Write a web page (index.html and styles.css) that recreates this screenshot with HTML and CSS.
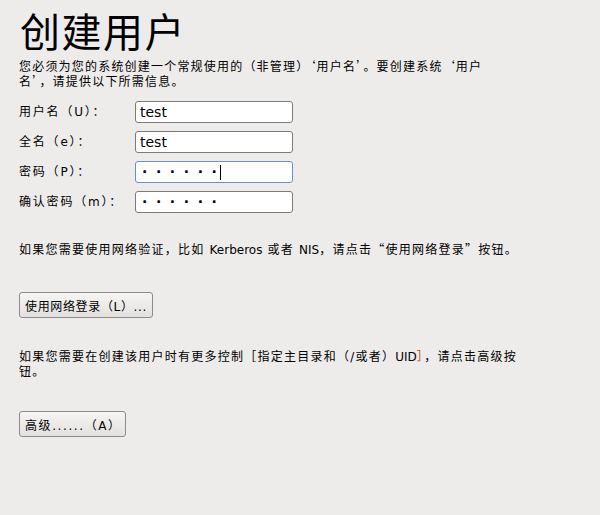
FILE: index.html
```html
<!DOCTYPE html>
<html lang="zh-CN">
<head>
<meta charset="utf-8">
<title>创建用户</title>
<link rel="stylesheet" href="styles.css">
</head>
<body>
<div class="page">
  <h1 class="title">创建用户</h1>
  <p class="intro">您必须为您的系统创建一个常规使用的（非管理）<span class="q">‘</span>用户名<span class="q">’</span>。要创建系统<span class="q">‘</span>用户<br>名<span class="q">’</span>，请提供以下所需信息。</p>

  <div class="form">
    <label class="label">用户名（U）：</label>
    <div class="field">test</div>
    <label class="label">全名（e）：</label>
    <div class="field">test</div>
    <label class="label">密码（P）：</label>
    <div class="field focused"><span class="dots">······</span><span class="caret"></span></div>
    <label class="label">确认密码（m）：</label>
    <div class="field"><span class="dots">······</span></div>
  </div>

  <p class="note note-net">如果您需要使用网络验证，比如 <span class="lat">Kerberos</span> 或者 <span class="lat">NIS</span>，请点击<span class="q">“</span>使用网络登录<span class="q">”</span>按钮。</p>
  <button class="btn btn-net" type="button">使用网络登录（L）...</button>

  <p class="note note-adv">如果您需要在创建该用户时有更多控制［指定主目录和（/或者）<span class="lat">UID</span><span class="bracket">］</span>，请点击高级按<br>钮。</p>
  <button class="btn btn-adv" type="button">高级......（A）</button>
</div>
</body>
</html>
```

FILE: styles.css
```css
html, body {
  margin: 0;
  padding: 0;
  background: #edeceb;
}

body {
  font-family: "DejaVu Sans", "Noto Sans CJK SC", sans-serif;
  font-size: 12px;
  color: #000;
  width: 600px;
  height: 515px;
  overflow: hidden;
}

.page {
  padding-left: 19px;
  display: flex;
  flex-direction: column;
  align-items: flex-start;
}

.q {
  font-family: "Noto Sans CJK SC", sans-serif;
  line-height: 0;
}

.lat {
  letter-spacing: 0;
}

.title {
  font-family: "Noto Sans CJK SC", sans-serif;
  font-size: 40px;
  font-weight: normal;
  line-height: 44px;
  letter-spacing: 1.5px;
  margin: 8px 0 0 1px;
}

.intro {
  margin: 8px 0 0 0;
  line-height: 15px;
  letter-spacing: 1.2px;
}

.form {
  margin-top: 11px;
  display: grid;
  grid-template-columns: 116px 158px;
  grid-auto-rows: 22px;
  row-gap: 8px;
  align-items: center;
}

.label {
  font-size: 12px;
  line-height: 22px;
  letter-spacing: 1.8px;
}

.field {
  box-sizing: border-box;
  height: 22px;
  background: #fff;
  border: 1px solid #7c7b79;
  border-radius: 3px;
  font-size: 14px;
  line-height: 20px;
  padding-left: 4px;
  display: flex;
  align-items: center;
}

.field.focused {
  border-color: #6b8fc2;
}

.dots {
  letter-spacing: 8.6px;
  padding-left: 2px;
  font-weight: bold;
}

.caret {
  display: inline-block;
  width: 1px;
  height: 15px;
  background: #000;
  margin-left: -6px;
}

.note {
  margin: 0;
  line-height: 15px;
  letter-spacing: 1.25px;
}

.note-net {
  margin-top: 30px;
}

.note-adv {
  margin-top: 32px;
}

.bracket {
  color: #c24a1c;
}

.btn {
  box-sizing: border-box;
  height: 26px;
  border: 1px solid #8e8c89;
  border-radius: 3px;
  background: linear-gradient(#f6f5f4, #e3e1df);
  font-family: "DejaVu Sans", "Noto Sans CJK SC", sans-serif;
  font-size: 12px;
  color: #000;
  padding: 0 5px;
  text-align: left;
  white-space: nowrap;
}

.btn-net {
  width: 134px;
  margin-top: 34px;
  letter-spacing: 0.65px;
}

.btn-adv {
  width: 107px;
  margin-top: 31px;
  letter-spacing: 1.6px;
}
```
